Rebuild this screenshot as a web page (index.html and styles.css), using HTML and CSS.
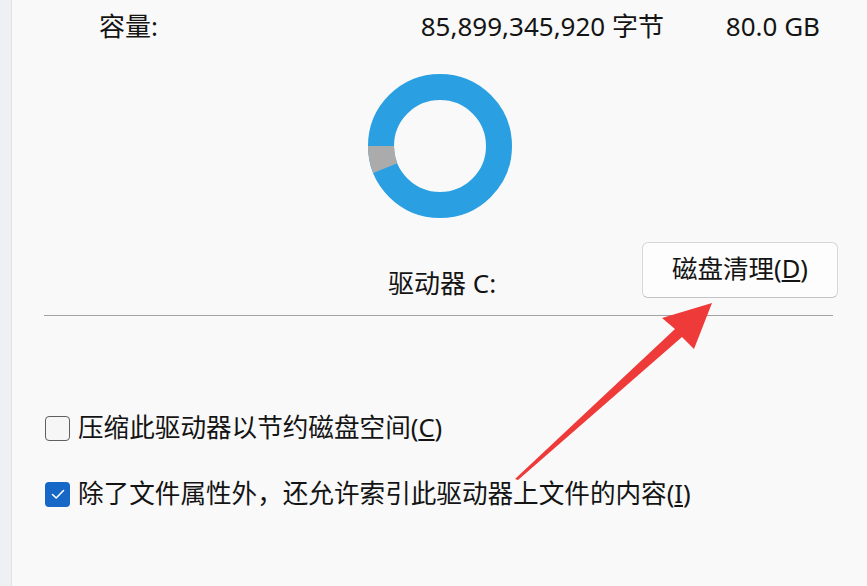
FILE: index.html
```html
<!DOCTYPE html>
<html lang="zh-CN">
<head>
<meta charset="utf-8">
<title>驱动器属性</title>
<link rel="stylesheet" href="styles.css">
</head>
<body>
<div class="page">
  <div class="strip"></div>
  <div class="content">
    <div class="cap-row">
      <span class="cap-label">容量:</span>
      <span class="cap-bytes">85,899,345,920 字节</span>
      <span class="cap-gb">80.0 GB</span>
    </div>
    <div class="donut">
      <svg width="144" height="144" viewBox="0 0 144 144">
        <circle cx="72" cy="72" r="59" fill="none" stroke="#2a9fe2" stroke-width="26"/>
        <circle cx="72" cy="72" r="59" fill="none" stroke="#ababab" stroke-width="26" stroke-dasharray="22.6 400" transform="rotate(158 72 72)"/>
      </svg>
    </div>
    <div class="drive-row">
      <span class="drive-label">驱动器 C:</span>
      <button class="btn">磁盘清理(<u>D</u>)</button>
    </div>
    <div class="sep"></div>
    <div class="check-row first">
      <span class="box"></span>
      <span class="check-text">压缩此驱动器以节约磁盘空间(<u>C</u>)</span>
    </div>
    <div class="check-row second">
      <span class="box checked">
        <svg width="24" height="24" viewBox="0 0 24 24"><path d="M6.5 12.5 L10.2 16 L17.5 8.5" fill="none" stroke="#ffffff" stroke-width="1.6" stroke-linecap="round" stroke-linejoin="round"/></svg>
      </span>
      <span class="check-text">除了文件属性外，还允许索引此驱动器上文件的内容(<u>I</u>)</span>
    </div>
  </div>
  <svg class="arrow" width="867" height="586" viewBox="0 0 867 586">
    <polygon points="712,303 662,318 675,329 515,479 518,480 682,337 694,349" fill="#ef3a3a"/>
  </svg>
</div>
</body>
</html>
```
FILE: styles.css
```css
html, body {
  margin: 0;
  padding: 0;
}
body {
  background: #f9f9f9;
  font-family: "Noto Sans", "Noto Sans CJK SC", sans-serif;
  font-size: 26px;
  color: #141414;
}
.page {
  position: relative;
  width: 867px;
  height: 586px;
  overflow: hidden;
  display: flex;
}
.strip {
  width: 11px;
  flex: none;
  background: #eef0f3;
  border-right: 1px solid #e2e2e2;
}
.content {
  margin-left: 32px;
  width: 795px;
  display: flex;
  flex-direction: column;
}
.cap-row {
  display: grid;
  grid-template-columns: 1fr auto 156px;
  align-items: center;
  height: 30px;
  line-height: 30px;
  margin-top: 11px;
  padding-right: 19px;
}
.cap-label {
  padding-left: 55px;
}
.cap-bytes {
  text-align: right;
}
.cap-gb {
  text-align: right;
}
.donut {
  margin-top: 33px;
  margin-left: 324px;
  width: 144px;
  height: 144px;
}
.donut svg {
  display: block;
}
.drive-row {
  display: flex;
  align-items: flex-end;
  margin-top: 24px;
  height: 56px;
}
.drive-label {
  margin-left: 344px;
  width: 254px;
  line-height: 30px;
}
.btn {
  width: 196px;
  height: 56px;
  box-sizing: border-box;
  border: 1px solid #d6d6d6;
  border-bottom-color: #c4c4c4;
  border-radius: 6px;
  background: #fdfdfd;
  font-family: inherit;
  font-size: 25.5px;
  color: #141414;
  padding: 0 0 4px 0;
  line-height: 30px;
}
.sep {
  margin-top: 17px;
  width: 789px;
  height: 1px;
  background: #a3a3a3;
}
.check-row {
  display: flex;
  align-items: center;
  height: 30px;
  line-height: 30px;
  gap: 8px;
  margin-left: 1px;
  font-size: 25.6px;
}
.check-row.first {
  margin-top: 97px;
}
.check-row.second {
  margin-top: 36px;
}
.box {
  width: 25px;
  height: 25px;
  box-sizing: border-box;
  border: 1.5px solid #5f5f5f;
  border-radius: 4px;
  background: #f6f6f6;
  flex: none;
  display: flex;
  align-items: center;
  justify-content: center;
}
.box.checked {
  border: none;
  background: #1767c7;
}
.box svg {
  display: block;
}
.arrow {
  position: absolute;
  left: 0;
  top: 0;
  pointer-events: none;
}
```
